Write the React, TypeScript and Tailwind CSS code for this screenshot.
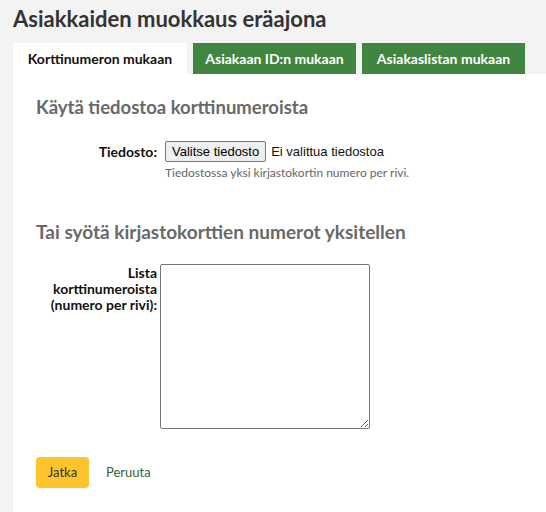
import React from 'react';

const font = { fontFamily: 'Lato, "Open Sans", Arial, sans-serif' };

function Tab({ label, active }: { label: string; active?: boolean }) {
  if (active) {
    return (
      <div className="h-[31px] w-[174px] bg-white flex items-center justify-center text-[14px] font-bold text-[#111]">
        {label}
      </div>
    );
  }
  return (
    <div className="h-[31px] w-[163px] bg-[#408540] flex items-center justify-center text-[14px] font-bold text-white">
      {label}
    </div>
  );
}

export default function App() {
  return (
    <div className="min-h-screen w-[546px] bg-[#f3f3f3] overflow-hidden" style={font}>
      <h1 className="pl-[13px] pt-[4px] text-[22px] font-bold text-[#333] leading-[30px]">
        Asiakkaiden muokkaus eräajona
      </h1>

      {/* Tabs */}
      <div className="mt-[9px] ml-[13px] flex items-start gap-[6px]">
        <Tab label="Korttinumeron mukaan" active />
        <Tab label="Asiakaan ID:n mukaan" />
        <Tab label="Asiakaslistan mukaan" />
      </div>

      {/* Panel */}
      <div className="ml-[13px] bg-white pl-[23px] pt-[21px] pb-[40px]">
        <h3 className="text-[18.5px] font-bold text-[#696969] leading-[24px]">
          Käytä tiedostoa korttinumeroista
        </h3>

        <div className="mt-[22px] flex">
          <div className="w-[121px] pt-[2px] text-right text-[14px] font-bold text-[#111] leading-[18px]">
            Tiedosto:
          </div>
          <div className="ml-[8px] flex flex-col">
            <div className="flex items-center gap-[5px]" style={{ fontFamily: 'Arial, "Liberation Sans", sans-serif' }}>
              <button className="h-[21px] px-[6px] text-[13px] text-black bg-[#efefef] border border-[#767676] rounded-[2px] leading-none">
                Valitse tiedosto
              </button>
              <span className="text-[13px] text-[#111]">Ei valittua tiedostoa</span>
            </div>
            <div className="mt-[3px] text-[12px] text-[#666] leading-[16px]">
              Tiedostossa yksi kirjastokortin numero per rivi.
            </div>
          </div>
        </div>

        <h3 className="mt-[39px] text-[19px] font-bold text-[#696969] leading-[24px]">
          Tai syötä kirjastokorttien numerot yksitellen
        </h3>

        <div className="mt-[20px] flex">
          <div className="w-[121px] pt-[1px] text-right text-[14px] font-bold text-[#111] leading-[16px]">
            Lista
            <br />
            korttinumeroista
            <br />
            (numero per rivi):
          </div>
          <textarea className="ml-[3px] w-[210px] h-[165px] border border-[#767676] rounded-[2px] bg-white" />
        </div>

        <div className="mt-[28px] flex items-center">
          <button className="h-[31px] w-[53px] rounded-[4px] bg-[#ffc32b] text-[13px] text-[#333]">Jatka</button>
          <a className="ml-[17px] text-[13px] text-[#336633]">Peruuta</a>
        </div>
      </div>
    </div>
  );
}
